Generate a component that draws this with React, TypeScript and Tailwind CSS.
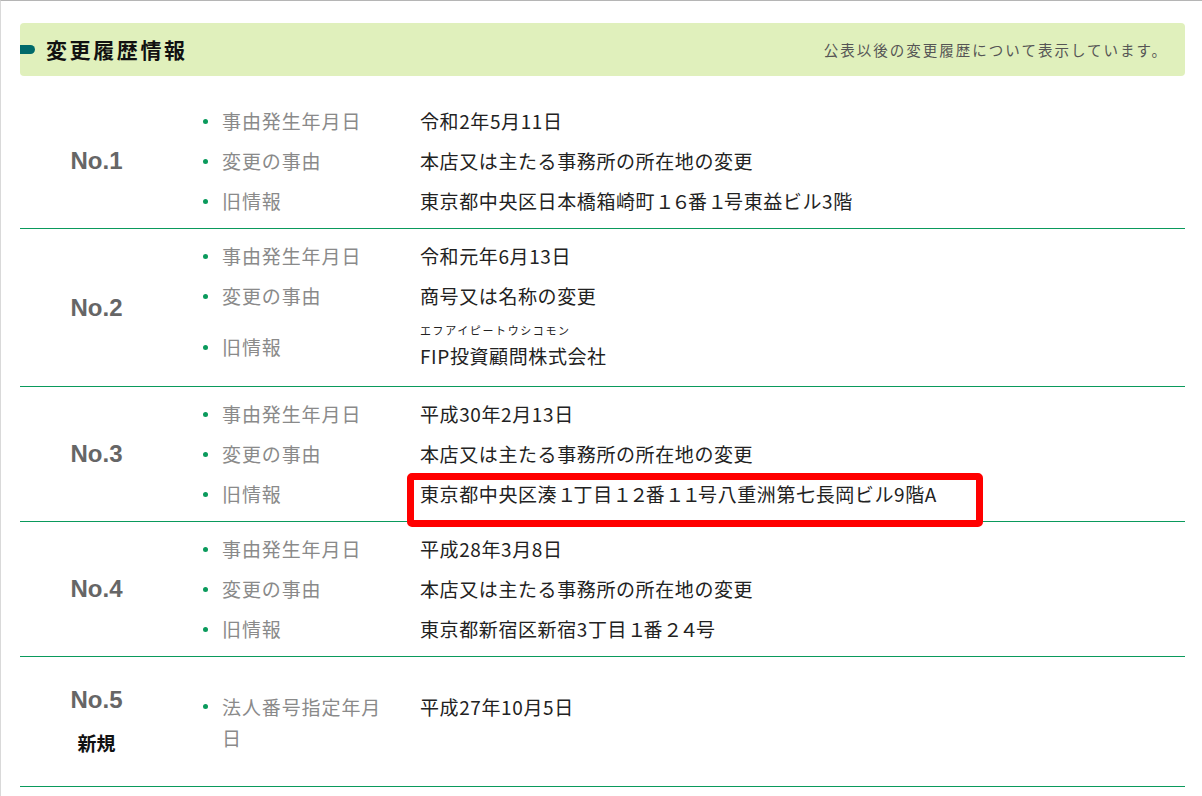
import React from "react";

type Item = { label: string; value: React.ReactNode; tall?: boolean };
type Row = { no: string; items: Item[] };

const jp = { fontFamily: '"Noto Sans CJK JP", "Noto Sans", sans-serif' };

function FW({ text }: { text: string }) {
  const parts = text.split(/([０-９]+)/);
  return (
    <>
      {parts.map((p, i) =>
        /^[０-９]+$/.test(p) ? (
          <span key={i} className="tracking-[-2.6px]">
            {p}
          </span>
        ) : (
          <React.Fragment key={i}>{p}</React.Fragment>
        )
      )}
    </>
  );
}

const rows: Row[] = [
  {
    no: "No.1",
    items: [
      { label: "事由発生年月日", value: "令和2年5月11日" },
      { label: "変更の事由", value: "本店又は主たる事務所の所在地の変更" },
      { label: "旧情報", value: <FW text="東京都中央区日本橋箱崎町１６番１号東益ビル3階" /> },
    ],
  },
  {
    no: "No.2",
    items: [
      { label: "事由発生年月日", value: "令和元年6月13日" },
      { label: "変更の事由", value: "商号又は名称の変更" },
      {
        label: "旧情報",
        tall: true,
        value: (
          <div className="flex flex-col pt-[5px]">
            <span className="h-[18px] text-[11px] leading-[18px] tracking-[1.6px]">エフアイピートウシコモン</span>
            <span className="h-[34px] leading-[34px]">FIP投資顧問株式会社</span>
          </div>
        ),
      },
    ],
  },
  {
    no: "No.3",
    items: [
      { label: "事由発生年月日", value: "平成30年2月13日" },
      { label: "変更の事由", value: "本店又は主たる事務所の所在地の変更" },
      { label: "旧情報", value: <FW text="東京都中央区湊１丁目１２番１１号八重洲第七長岡ビル9階A" /> },
    ],
  },
  {
    no: "No.4",
    items: [
      { label: "事由発生年月日", value: "平成28年3月8日" },
      { label: "変更の事由", value: "本店又は主たる事務所の所在地の変更" },
      { label: "旧情報", value: <FW text="東京都新宿区新宿3丁目１番２４号" /> },
    ],
  },
];

function Bullet() {
  return <span className="h-[5px] w-[5px] shrink-0 rounded-full bg-[#0a9a5c]" />;
}

export default function App() {
  return (
    <div
      className="relative h-[796px] w-[1202px] overflow-hidden border-l border-t border-l-[#d9d9d9] border-t-[#b5b5b5] bg-white"
      style={jp}
    >
      <div className="ml-[19px] mt-[22px] w-[1165px]">
        {/* Header */}
        <div className="flex h-[53px] items-center rounded-[4px] bg-[#e0f0bc] pr-[17px]">
          <span className="h-[9px] w-[15px] rounded-r-full bg-[#006a6a]" />
          <h2 className="ml-[11px] text-[21px] font-bold leading-none tracking-[2.6px] text-[#111]">変更履歴情報</h2>
          <span className="ml-auto text-[14.5px] tracking-[2px] text-[#555]">公表以後の変更履歴について表示しています。</span>
        </div>

        {/* List */}
        <div className="mt-[18px]">
          {rows.map((r) => (
            <div key={r.no} className="flex items-center border-b border-[#0a9a5c] py-[7px]">
              <div
                className="w-[153px] text-center text-[24px] font-bold text-[#666]"
                style={{ fontFamily: '"Liberation Sans", Arial, sans-serif' }}
              >
                {r.no}
              </div>
              <div className="flex flex-col pl-[30px]">
                {r.items.map((it, i) => (
                  <div
                    key={i}
                    className={
                      it.tall
                        ? "flex h-[63px] items-center text-[19px] tracking-[0.6px]"
                        : "flex h-[40px] items-center text-[19px] leading-[40px] tracking-[0.6px]"
                    }
                  >
                    <div className="flex w-[217px] items-center">
                      <Bullet />
                      <span className="ml-[14px] tracking-[0.9px] text-[#8a8a8a]">{it.label}</span>
                    </div>
                    <div className="self-start text-[#222]">{it.value}</div>
                  </div>
                ))}
              </div>
            </div>
          ))}

          {/* Row 5 */}
          <div className="flex h-[130px] items-center border-b border-[#0a9a5c]">
            <div className="flex w-[153px] flex-col items-center">
              <div
                className="flex h-[44px] items-center text-[24px] font-bold text-[#666]"
                style={{ fontFamily: '"Liberation Sans", Arial, sans-serif' }}
              >
                No.5
              </div>
              <div className="flex h-[44px] items-center text-[19px] font-bold text-[#111]">新規</div>
            </div>
            <div className="flex h-[62px] pl-[30px] text-[19px] leading-[31px] tracking-[0.6px]">
              <div className="flex w-[217px] items-start">
                <span className="mt-[13px] h-[5px] w-[5px] shrink-0 rounded-full bg-[#0a9a5c]" />
                <span className="ml-[14px] w-[166px] tracking-[0.9px] text-[#8a8a8a]">法人番号指定年月日</span>
              </div>
              <div className="text-[#222]">平成27年10月5日</div>
            </div>
          </div>
        </div>
      </div>

      {/* Red highlight annotation */}
      <div className="pointer-events-none absolute left-[406px] top-[472px] h-[54px] w-[576px] rounded-[5px] border-[7px] border-[#ff0000]" />
    </div>
  );
}
